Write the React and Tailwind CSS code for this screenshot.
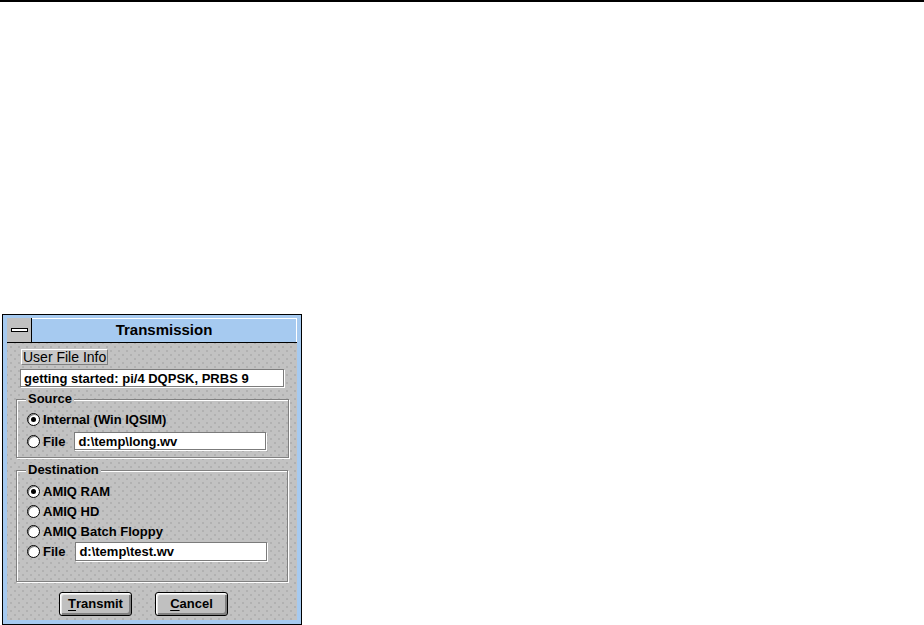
import React from "react";

const font = { fontFamily: '"Liberation Sans", Arial, sans-serif' };

// Win 3.x style radio
function Radio({ checked }) {
  return (
    <span className="flex h-[13px] w-[13px] shrink-0 items-center justify-center rounded-full border border-black bg-white shadow-[inset_1px_1px_0_#808080]">
      {checked && <span className="h-[5px] w-[5px] rounded-full bg-black" />}
    </span>
  );
}

function TextField({ value, className }) {
  return (
    <div
      className={`flex items-center border border-[#7b7b7b] bg-white pl-[3px] text-[13px] font-bold leading-none text-black shadow-[1px_1px_0_#ffffff] ${className}`}
    >
      {value}
    </div>
  );
}

function RadioRow({ label, checked, children, className = "" }) {
  return (
    <div className={`flex items-center ${className}`}>
      <Radio checked={checked} />
      <span className="ml-[3px] text-[13px] font-bold leading-none text-black">{label}</span>
      {children}
    </div>
  );
}

function Group({ title, className, children }) {
  return (
    <div
      className={`relative border border-[#808080] shadow-[inset_1px_1px_0_#ffffff,1px_1px_0_#ffffff] ${className}`}
    >
      <span className="absolute -top-[8px] left-[9px] bg-[#c0c0c0] px-[2px] text-[13px] font-bold leading-[14px] text-black">
        {title}
      </span>
      {children}
    </div>
  );
}

function Button({ hot, rest }) {
  return (
    <button className="flex h-[24px] w-[73px] items-center justify-center rounded-[3px] border border-black bg-[#c0c0c0] text-[13px] font-bold text-black shadow-[inset_1px_1px_0_#ffffff,inset_2px_2px_0_#e8e8e8,inset_-2px_-2px_0_#808080]">
      <span className="underline underline-offset-2">{hot}</span>
      {rest}
    </button>
  );
}

export default function App() {
  return (
    <div className="min-h-[625px] w-[924px] border-t-2 border-black bg-white" style={font}>
      {/* Transmission window */}
      <div className="ml-[2px] mt-[312px] flex h-[311px] w-[300px] flex-col border border-black bg-[#a6caf0] px-[4px] pb-[4px] pt-[3px]">
        {/* title bar */}
        <div className="flex h-[25px] shrink-0 border-b border-black">
          <div className="flex w-[25px] shrink-0 items-center justify-center border-r border-black bg-[#c0c0c0]">
            <span className="h-[4px] w-[17px] border border-black bg-white" />
          </div>
          <div className="flex flex-1 items-center justify-center border-r border-t border-white bg-[#a6caf0] text-[15px] font-bold text-black">
            Transmission
          </div>
        </div>

        {/* body */}
        <div className="flex flex-1 flex-col bg-[#c2c2c2] bg-[radial-gradient(#a8a8a8_0.6px,transparent_0.9px),radial-gradient(#a8a8a8_0.6px,transparent_0.9px)] bg-[length:8px_8px] bg-[position:0_0,4px_4px]">
          <div className="ml-[14px] mt-[6px] flex h-[16px] w-fit items-center border border-b-[#808080] border-l-white border-r-[#808080] border-t-white bg-[#c8c8c8] px-[1px] text-[14px] leading-none text-black">
            User File Info
          </div>
          <TextField value="getting started: pi/4 DQPSK, PRBS 9" className="ml-[13px] mt-[4px] h-[18px] w-[264px]" />

          <Group title="Source" className="ml-[9px] mt-[12px] h-[59px] w-[273px]">
            <div className="flex flex-col pl-[10px] pt-[11px]">
              <RadioRow label="Internal (Win IQSIM)" checked className="h-[16px]" />
              <RadioRow label="File" className="mt-[5px] h-[18px]">
                <TextField value="d:\temp\long.wv" className="ml-[9px] h-[18px] w-[192px]" />
              </RadioRow>
            </div>
          </Group>

          <Group title="Destination" className="ml-[9px] mt-[12px] h-[112px] w-[272px]">
            <div className="flex flex-col pl-[10px] pt-[10px]">
              <RadioRow label="AMIQ RAM" checked className="h-[20px]" />
              <RadioRow label="AMIQ HD" className="h-[20px]" />
              <RadioRow label="AMIQ Batch Floppy" className="h-[20px]" />
              <RadioRow label="File" className="h-[20px]">
                <TextField value="d:\temp\test.wv" className="ml-[10px] h-[19px] w-[192px]" />
              </RadioRow>
            </div>
          </Group>

          <div className="ml-[52px] mt-[10px] flex gap-[23px]">
            <Button hot="T" rest="ransmit" />
            <Button hot="C" rest="ancel" />
          </div>
        </div>
      </div>
    </div>
  );
}
